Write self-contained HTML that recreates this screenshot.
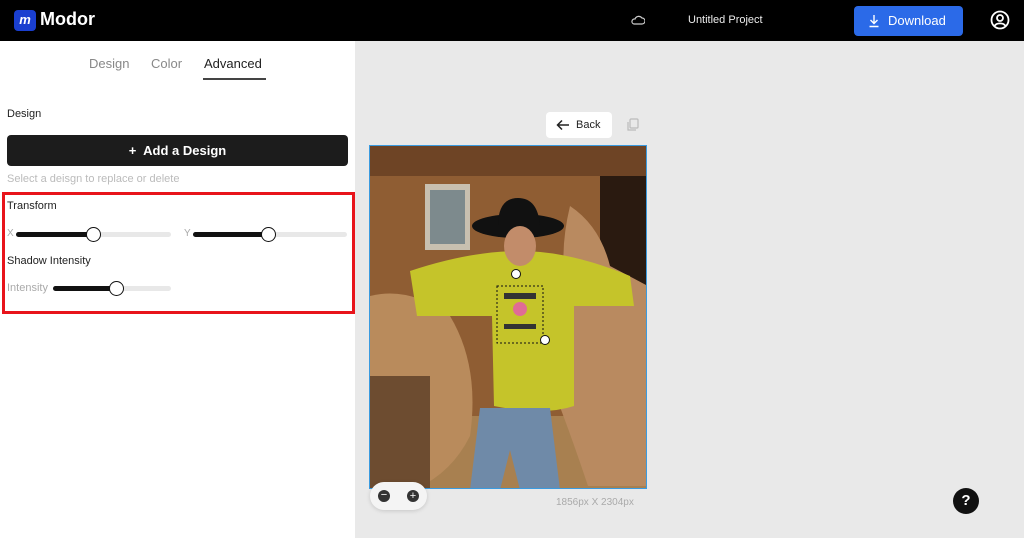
<!DOCTYPE html>
<html><head><meta charset="utf-8"><style>
*{margin:0;padding:0;box-sizing:border-box}
body{width:1024px;height:538px;overflow:hidden;font-family:"Liberation Sans",sans-serif;background:#e9e9e9;position:relative}
.a{position:absolute}
.top{left:0;top:0;width:1024px;height:41px;background:#000}
.side{left:0;top:41px;width:355px;height:497px;background:#fff}
.trk{position:absolute;height:5px;background:#e8e8e8;border-radius:3px}
.fill{position:absolute;left:0;top:0;height:5px;background:#111;border-radius:3px}
.knob{position:absolute;top:-5px;width:15px;height:15px;border-radius:50%;background:#fff;border:1.5px solid #111}
</style></head><body>
<div class="a top"></div>
<div class="a" style="left:14px;top:10px;width:22px;height:21px;background:#1a3fd0;border-radius:4px;color:#fff;font-style:italic;font-weight:bold;font-size:13px;text-align:center;line-height:20px">m</div>
<div class="a" style="left:40px;top:9px;color:#fff;font-weight:bold;font-size:18px">Modor</div>
<svg class="a" style="left:631px;top:14px" width="14" height="12" viewBox="0 0 14 12"><path d="M3 10h8a3 3 0 0 0 0-6 4 4 0 0 0-7 1 2.5 2.5 0 0 0-1 5z" fill="none" stroke="#ccc" stroke-width="1.2"/></svg>
<div class="a" style="left:688px;top:14px;color:#eee;font-size:11px">Untitled Project</div>
<div class="a" style="left:854px;top:6px;width:109px;height:30px;background:#2b6ae8;border-radius:4px;color:#fff;font-size:13px;line-height:30px;padding-left:34px">Download</div>
<svg class="a" style="left:868px;top:14px" width="12" height="14" viewBox="0 0 12 14"><path d="M6 1v8M2.5 6l3.5 3.5L9.5 6M1.5 12.5h9" stroke="#fff" stroke-width="1.4" fill="none"/></svg>
<svg class="a" style="left:990px;top:10px" width="20" height="20" viewBox="0 0 20 20"><circle cx="10" cy="10" r="8.5" fill="none" stroke="#fff" stroke-width="1.8"/><circle cx="10" cy="8" r="3" fill="none" stroke="#fff" stroke-width="1.8"/><path d="M4.5 16c2-3.5 9-3.5 11 0" fill="none" stroke="#fff" stroke-width="1.8"/></svg>

<div class="a side"></div>
<div class="a" style="left:89px;top:56px;font-size:13px;color:#888">Design</div>
<div class="a" style="left:151px;top:56px;font-size:13px;color:#888">Color</div>
<div class="a" style="left:204px;top:56px;font-size:13px;color:#222">Advanced</div>
<div class="a" style="left:203px;top:78px;width:63px;height:2px;background:#444"></div>
<div class="a" style="left:7px;top:108px;font-size:11px;color:#222">Design</div>
<div class="a" style="left:7px;top:135px;width:341px;height:31px;background:#1c1c1c;border-radius:4px;color:#fff;font-size:13px;font-weight:bold;text-align:center;line-height:31px">+&nbsp; Add a Design</div>
<div class="a" style="left:7px;top:173px;font-size:11px;color:#bbb">Select a deisgn to replace or delete</div>
<div class="a" style="left:2px;top:192px;width:353px;height:122px;border:3px solid #e8141b"></div>
<div class="a" style="left:7px;top:200px;font-size:11px;color:#222">Transform</div>
<div class="a" style="left:7px;top:228px;font-size:10px;color:#aaa">X</div>
<div class="trk" style="left:16px;top:232px;width:155px"><div class="fill" style="width:78px"></div><div class="knob" style="left:70px"></div></div>
<div class="a" style="left:184px;top:228px;font-size:10px;color:#aaa">Y</div>
<div class="trk" style="left:193px;top:232px;width:154px"><div class="fill" style="width:76px"></div><div class="knob" style="left:68px"></div></div>
<div class="a" style="left:7px;top:255px;font-size:11px;color:#222">Shadow Intensity</div>
<div class="a" style="left:7px;top:282px;font-size:11px;color:#aaa">Intensity</div>
<div class="trk" style="left:53px;top:286px;width:118px"><div class="fill" style="width:64px"></div><div class="knob" style="left:56px"></div></div>

<div class="a" style="left:546px;top:112px;width:66px;height:26px;background:#fff;border-radius:4px;font-size:11px;color:#222;line-height:26px;padding-left:30px">Back</div>
<svg class="a" style="left:556px;top:119px" width="14" height="12" viewBox="0 0 14 12"><path d="M13 6H2M6 1.5 1.5 6 6 10.5" stroke="#222" stroke-width="1.5" fill="none"/></svg>
<svg class="a" style="left:626px;top:118px" width="14" height="14" viewBox="0 0 14 14"><rect x="4" y="1" width="8" height="9" rx="1" fill="none" stroke="#bbb" stroke-width="1.2"/><path d="M2 4v8h8" fill="none" stroke="#bbb" stroke-width="1.2"/></svg>

<div class="a" style="left:369px;top:145px;width:278px;height:344px;border:1.5px solid #3a9be0;overflow:hidden;background:#8a5a30">
<svg width="278" height="344" viewBox="0 0 278 344">
<rect width="278" height="344" fill="#8f5d33"/>
<rect x="0" y="0" width="278" height="30" fill="#6e4425"/>
<rect x="230" y="30" width="48" height="140" fill="#2a1a10"/>
<rect x="55" y="38" width="45" height="66" fill="#c8c0b0"/><rect x="60" y="44" width="35" height="54" fill="#7d8a8d"/>
<rect x="0" y="270" width="278" height="74" fill="#a88050"/>
<path d="M0 150q40-10 80 20q30 50 20 120q-20 40-60 55H0z" fill="#b98b5c"/>
<path d="M0 230h60v114H0z" fill="#6d4c30"/>
<path d="M200 60q30 20 40 60l38 20v200h-60q-20-60-40-110q-10-50 20-80q-10-40 2-90z" fill="#b98a60"/>
<path d="M40 125q60-20 110-20t110 25l4 30-60 0 0 100q-30 10-80 0l-2-90-75 0z" fill="#c5c42a"/>
<path d="M110 262h70l10 82h-40l-10-40-10 40h-30z" fill="#6f8aa8"/>
<ellipse cx="148" cy="80" rx="46" ry="12" fill="#111"/><path d="M128 80q0-28 20-28t22 28z" fill="#111"/>
<ellipse cx="150" cy="100" rx="16" ry="20" fill="#c28c6a"/>
<rect x="127" y="140" width="46" height="57" fill="none" stroke="#111" stroke-dasharray="2 2"/>
<rect x="134" y="147" width="32" height="6" fill="#333"/><circle cx="150" cy="163" r="7" fill="#e06c95"/><rect x="134" y="178" width="32" height="5" fill="#333"/>
<circle cx="175" cy="194" r="4.5" fill="#fff" stroke="#111"/><circle cx="146" cy="128" r="4.5" fill="#fff" stroke="#111"/>
</svg></div>
<div class="a" style="left:370px;top:482px;width:57px;height:28px;background:#f4f4f4;border-radius:14px;box-shadow:0 1px 4px rgba(0,0,0,.15)"></div>
<div class="a" style="left:378px;top:490px;width:12px;height:12px;border-radius:50%;background:#333;color:#fff;font-size:11px;line-height:11px;text-align:center">−</div>
<div class="a" style="left:407px;top:490px;width:12px;height:12px;border-radius:50%;background:#333;color:#fff;font-size:11px;line-height:12px;text-align:center">+</div>
<div class="a" style="left:556px;top:497px;font-size:10px;color:#aaa">1856px X 2304px</div>
<div class="a" style="left:953px;top:488px;width:26px;height:26px;border-radius:50%;background:#111;color:#fff;font-weight:bold;font-size:15px;text-align:center;line-height:26px">?</div>
</body></html>
